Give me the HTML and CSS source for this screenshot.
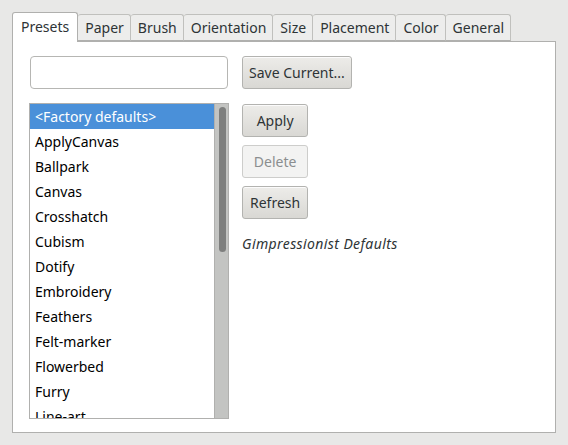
FILE: index.html
```html
<!DOCTYPE html>
<html>
<head>
<meta charset="utf-8">
<link rel="stylesheet" href="styles.css">
</head>
<body>
<div class="notebook">
  <div class="tabs">
    <div class="tab active">Presets</div>
    <div class="tab">Paper</div>
    <div class="tab">Brush</div>
    <div class="tab">Orientation</div>
    <div class="tab">Size</div>
    <div class="tab">Placement</div>
    <div class="tab">Color</div>
    <div class="tab">General</div>
  </div>
  <div class="page">
    <div class="left">
      <div class="entry"></div>
      <div class="list">
        <div class="rows">
          <div class="row selected">&lt;Factory defaults&gt;</div>
          <div class="row">ApplyCanvas</div>
          <div class="row">Ballpark</div>
          <div class="row">Canvas</div>
          <div class="row">Crosshatch</div>
          <div class="row">Cubism</div>
          <div class="row">Dotify</div>
          <div class="row">Embroidery</div>
          <div class="row">Feathers</div>
          <div class="row">Felt-marker</div>
          <div class="row">Flowerbed</div>
          <div class="row">Furry</div>
          <div class="row">Line-art</div>
        </div>
        <div class="trough"><div class="slider"></div></div>
      </div>
    </div>
    <div class="right">
      <button class="btn save">Save Current...</button>
      <div class="actions">
        <div class="btngroup">
          <button class="btn">Apply</button>
          <button class="btn disabled">Delete</button>
          <button class="btn">Refresh</button>
        </div>
        <div class="desc">Gimpressionist Defaults</div>
      </div>
    </div>
  </div>
</div>
</body>
</html>
```

FILE: styles.css
```css
html, body {
  margin: 0;
  padding: 0;
  background: #e8e8e7;
  font-family: "Noto Sans", "DejaVu Sans", sans-serif;
  font-size: 14px;
  color: #2e3436;
}
body {
  padding: 12px 12px 0 12px;
  width: 545px;
}
.notebook {
  display: flex;
  flex-direction: column;
}
.tabs {
  display: flex;
  align-items: flex-end;
  height: 29px;
  position: relative;
  z-index: 1;
}
.tab {
  box-sizing: border-box;
  height: 27px;
  padding: 0 6px 0 7px;
  line-height: 25px;
  border: 1px solid #c0c0bd;
  border-left: none;
  border-bottom: 1px solid #b0b0ae;
  background: #ededec;
  color: #2e3436;
  border-radius: 3px 3px 0 0;
}
.tab.active {
  height: 30px;
  margin-bottom: -1px;
  border-left: 1px solid #b0b0ae;
  border-color: #b0b0ae;
  border-bottom: none;
  background: #ffffff;
  padding: 0 8px 0 8px;
  line-height: 28px;
}
.page {
  box-sizing: border-box;
  height: 392px;
  width: 544px;
  background: #ffffff;
  border: 1px solid #b0b0ae;
  padding: 14px 0 13px 16px;
  display: flex;
  gap: 13px;
}
.left {
  display: flex;
  flex-direction: column;
  gap: 14px;
  width: 200px;
}
.entry {
  box-sizing: border-box;
  height: 33px;
  width: 198px;
  margin: 0 1px;
  border: 1px solid #b6b6b3;
  border-radius: 4px;
  background: #ffffff;
}
.list {
  box-sizing: border-box;
  flex: 1;
  border: 1px solid #b0b0ae;
  display: flex;
  overflow: hidden;
  min-height: 0;
}
.rows {
  flex: 1;
  overflow: hidden;
}
.row {
  height: 25px;
  line-height: 25px;
  padding-left: 5px;
  color: #000000;
  white-space: nowrap;
}
.row.selected {
  background: #4a90d9;
  color: #ffffff;
}
.trough {
  box-sizing: border-box;
  width: 14px;
  background: #c3c4c2;
  border-left: 1px solid #b0b0ae;
  padding: 3px 3px 0 4px;
}
.slider {
  width: 7px;
  height: 145px;
  background: #7e7f7e;
  border-radius: 4px;
}
.right {
  display: flex;
  flex-direction: column;
  align-items: flex-start;
  gap: 15px;
}
.actions {
  display: flex;
  flex-direction: column;
  align-items: flex-start;
  gap: 15px;
}
.btngroup {
  display: flex;
  flex-direction: column;
  align-items: stretch;
  gap: 8px;
}
.btn {
  box-sizing: border-box;
  height: 33px;
  padding: 0 7px;
  white-space: nowrap;
  font-family: "Noto Sans", "DejaVu Sans", sans-serif;
  font-size: 14px;
  color: #2e3436;
  border: 1px solid #b3b3b0;
  border-radius: 3px;
  background: linear-gradient(#edece9, #d9d8d4);
  box-shadow: inset 0 1px rgba(255,255,255,0.8);
}
.btn.save {
  padding: 0 6px;
}
.btn.disabled {
  color: #8b8e8f;
  background: #f3f3f2;
  border-color: #cdcdcb;
  box-shadow: none;
}
.desc {
  font-style: italic;
  letter-spacing: 0.4px;
  color: #2e3436;
}
```
